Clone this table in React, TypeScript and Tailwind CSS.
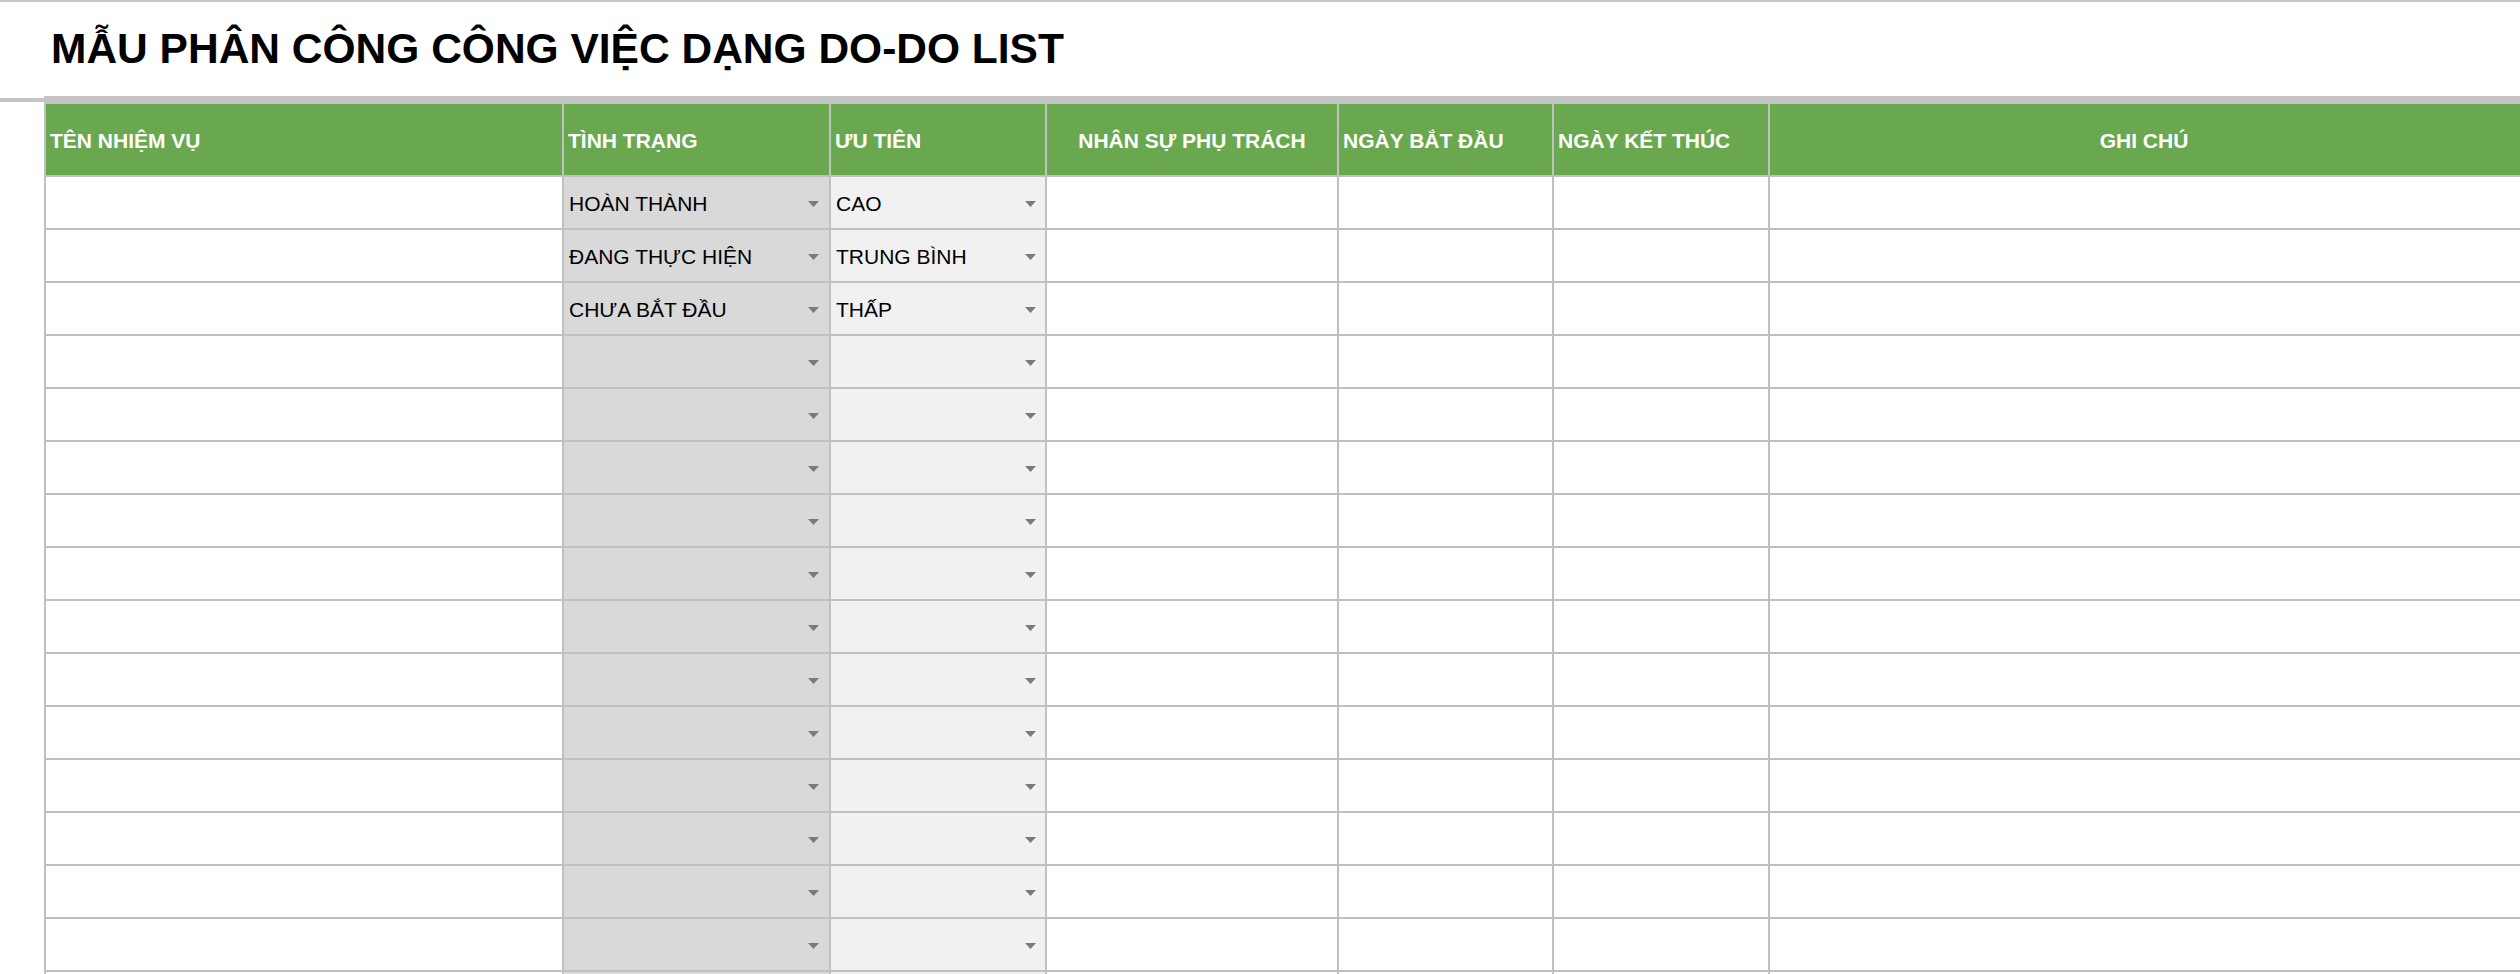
import React from "react";

const LINE = "border-[#c0c0c0]";

function Arrow() {
  return (
    <svg width="11" height="6" viewBox="0 0 11 6" className="shrink-0">
      <polygon points="0,0 11,0 5.5,6" fill="#7a7a7a" />
    </svg>
  );
}

const headers: { label: string; cls: string }[] = [
  { label: "TÊN NHIỆM VỤ", cls: "justify-start px-[4px]" },
  { label: "TÌNH TRẠNG", cls: "justify-start px-[4px]" },
  { label: "ƯU TIÊN", cls: "justify-start px-[4px]" },
  { label: "NHÂN SỰ PHỤ TRÁCH", cls: "justify-center px-[4px]" },
  { label: "NGÀY BẮT ĐẦU", cls: "justify-start px-[4px]" },
  { label: "NGÀY KẾT THÚC", cls: "justify-start px-[4px]" },
  { label: "GHI CHÚ", cls: "justify-center pl-[4px] pr-[14px]" },
];

const statuses = ["HOÀN THÀNH", "ĐANG THỰC HIỆN", "CHƯA BẮT ĐẦU"];
const priorities = ["CAO", "TRUNG BÌNH", "THẤP"];

export default function App() {
  const rows = Array.from({ length: 16 }, (_, i) => i);
  return (
    <div className="w-[2520px] h-[974px] overflow-hidden bg-white font-['Liberation_Sans',Arial,sans-serif] text-black">
      <div className="h-[2px] bg-[#c8c8c8]" />
      <div className="h-[94px] flex items-center pl-[51px]">
        <h1 className="text-[42.5px] leading-[42px] font-bold whitespace-nowrap">
          MẪU PHÂN CÔNG CÔNG VIỆC DẠNG DO-DO LIST
        </h1>
      </div>
      <div className="flex h-[8px]">
        <div className="w-[44px] flex items-center">
          <div className="h-[4px] w-full bg-[#c4c4c4]" />
        </div>
        <div className="flex-1 bg-[#c4c4c4]" />
      </div>
      <div className={`ml-[44px] border-l-2 ${LINE}`}>
        <div className="grid grid-cols-[518px_267px_216px_292px_215px_216px_760px]">
          {headers.map((h) => (
            <div
              key={h.label}
              className={`h-[73px] border-r-2 border-b-2 ${LINE} bg-[#6aa84f] text-white font-bold text-[21px] flex items-center pt-[2px] whitespace-nowrap ${h.cls}`}
            >
              {h.label}
            </div>
          ))}
          {rows.map((r) => (
            <React.Fragment key={r}>
              <div className={`h-[53px] border-r-2 border-b-2 ${LINE}`} />
              <div
                className={`h-[53px] border-r-2 border-b-2 ${LINE} bg-[#d9d9d9] flex items-center justify-between pl-[5px] pr-[10px] pt-[2px] text-[21px] whitespace-nowrap`}
              >
                <span>{statuses[r] ?? ""}</span>
                <Arrow />
              </div>
              <div
                className={`h-[53px] border-r-2 border-b-2 ${LINE} bg-[#f1f1f1] flex items-center justify-between pl-[5px] pr-[9px] pt-[2px] text-[21px] whitespace-nowrap`}
              >
                <span>{priorities[r] ?? ""}</span>
                <Arrow />
              </div>
              <div className={`h-[53px] border-r-2 border-b-2 ${LINE}`} />
              <div className={`h-[53px] border-r-2 border-b-2 ${LINE}`} />
              <div className={`h-[53px] border-r-2 border-b-2 ${LINE}`} />
              <div className={`h-[53px] border-r-2 border-b-2 ${LINE}`} />
            </React.Fragment>
          ))}
        </div>
      </div>
    </div>
  );
}
